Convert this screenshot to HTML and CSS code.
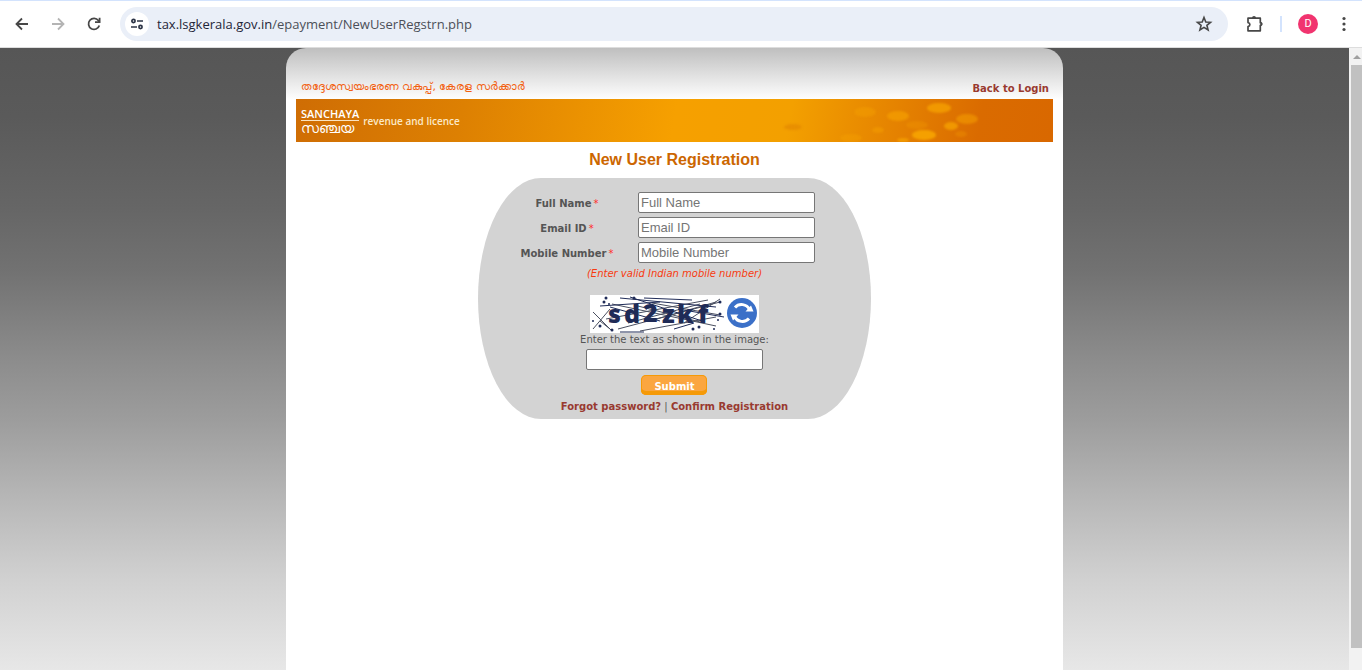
FILE: index.html
```html
<!DOCTYPE html>
<html lang="en">
<head>
<meta charset="utf-8">
<meta name="viewport" content="width=device-width, initial-scale=1">
<title>New User Registration</title>
<link rel="stylesheet" href="styles.css">
</head>
<body>
<header class="toolbar">
  <button class="tool" type="button" aria-label="Back"><svg width="16" height="16" viewBox="0 0 16 16" fill="none" stroke="#474747" stroke-width="1.8"><path d="M14 8H3M8 2.5 2.5 8 8 13.5"/></svg></button>
  <button class="tool" type="button" aria-label="Forward"><svg width="16" height="16" viewBox="0 0 16 16" fill="none" stroke="#b4b4b4" stroke-width="1.8"><path d="M2 8h11M8 2.5 13.500 8 8 13.500"/></svg></button>
  <button class="tool" type="button" aria-label="Reload"><svg width="16" height="16" viewBox="0 0 16 16" fill="none" stroke="#474747" stroke-width="1.8"><path d="M13.300 9.500A5.500 5.500 0 1 1 12.400 4.500L13.500 6"/><path d="M13.600 1.800V6.200H9"/></svg></button>
  <div class="address">
    <button class="site-info" type="button" aria-label="Site information"><svg width="14" height="14" viewBox="0 0 14 14" fill="none" stroke="#2c3446" stroke-width="1.700"><circle cx="3.500" cy="4" r="1.600"/><path d="M7 4h6M1 10h6"/><circle cx="10.500" cy="10" r="1.600"/></svg></button>
    <span class="url">tax.lsgkerala.gov.in<span class="path">/epayment/NewUserRegstrn.php</span></span>
    <button class="star" type="button" aria-label="Bookmark"><svg width="18" height="18" viewBox="0 0 18 18" fill="none" stroke="#474747" stroke-width="1.600"><path d="m9 2.500 1.800 4.500 4.700.3-3.600 3 1.200 4.700L9 12.400 4.900 15l1.200-4.700-3.600-3 4.700-.3z"/></svg></button>
  </div>
  <button class="extensions" type="button" aria-label="Extensions"><svg width="18" height="18" viewBox="0 0 18 18"><path d="M2 3.200h12.300v4.500h.4a1.400 1.400 0 0 1 0 2.600h-.4v5.500H2v-4.300c2.500-.4 2.500-3.500 0-3.900z" fill="none" stroke="#474747" stroke-width="1.700" stroke-linejoin="round"/><path d="M6 3a2 2 0 0 1 4 0zM14.500 7a2 2 0 0 1 0 4z" fill="#474747"/></svg></button>
  <span class="divider"></span>
  <button class="avatar" type="button">D</button>
  <button class="menu" type="button" aria-label="Menu"><svg width="4" height="16" viewBox="0 0 4 16" fill="#474747"><circle cx="2" cy="2.500" r="1.600"/><circle cx="2" cy="8" r="1.600"/><circle cx="2" cy="13.500" r="1.600"/></svg></button>
</header>
<div class="viewport">
  <div class="backdrop">
    <main class="sheet">
      <div class="top-row">
        <span class="department" lang="ml">തദ്ദേശസ്വയംഭരണ വകുപ്പ്, കേരള സര്‍ക്കാര്‍</span>
        <a class="link" href="#login">Back to Login</a>
      </div>
      <div class="banner">
        <svg class="spots" width="240" height="43" viewBox="0 0 240 43" fill="#f5a000">
          <ellipse cx="52" cy="13" rx="11" ry="5" opacity=".45"/><ellipse cx="85" cy="17" rx="11" ry="5" opacity=".7"/>
          <ellipse cx="126" cy="9" rx="12" ry="5" opacity=".8"/><ellipse cx="154" cy="20" rx="11" ry="5" opacity=".55"/>
          <ellipse cx="138" cy="27" rx="7" ry="4" opacity=".8"/><ellipse cx="111" cy="36" rx="12" ry="5"/>
          <ellipse cx="65" cy="31" rx="6" ry="3" opacity=".5"/><ellipse cx="38" cy="39" rx="11" ry="4" opacity=".45"/>
          <ellipse cx="104" cy="26" rx="11" ry="4" opacity=".3"/><ellipse cx="90" cy="41" rx="6" ry="2" opacity=".8"/>
          <ellipse cx="148" cy="35" rx="6" ry="3" opacity=".3"/><ellipse cx="-20" cy="28" rx="9" ry="3" fill="#e88f00"/>
        </svg>
        <span class="brand"><span class="brand-en">SANCHAYA</span><span class="brand-ml" lang="ml">സഞ്ചയ</span></span>
        <span class="tagline">revenue and licence</span>
      </div>
      <h1 class="title">New User Registration</h1>
      <form class="panel">
        <div class="fields">
          <label for="name">Full Name<span class="req">*</span></label><input class="box" id="name" type="text" placeholder="Full Name">
          <label for="email">Email ID<span class="req">*</span></label><input class="box" id="email" type="text" placeholder="Email ID">
          <label for="mobile">Mobile Number<span class="req">*</span></label><input class="box" id="mobile" type="text" placeholder="Mobile Number">
        </div>
        <p class="hint">(Enter valid Indian mobile number)</p>
        <div class="captcha">
          <svg width="136" height="38" viewBox="0 0 136 38" role="img" aria-label="Captcha">
            <g fill="none" stroke="#4a4f60" stroke-width="1"><path d="M3 17l18 18M3 34l17-20M10 26l10 8M22 9l104 22M28 34 130 7M16 24 118 5M50 36l76-14M44 10l70 18M62 8l68 12M94 28l36-24M60 26l66-19M38 28l72-19"/></g>
            <g fill="none" stroke="#1f2b57" stroke-width="1"><path d="M30 3l96 9M10 11l60-4M40 2l72 24M54 3l48 2M30 37h24M84 34l20-6M88 14l46 8M20 12l50 14"/></g>
            <g fill="#1f2b57"><circle cx="16" cy="3" r="1.500"/><circle cx="19" cy="9" r="1"/><circle cx="14" cy="7" r="1.500"/><circle cx="3" cy="26" r="1"/><circle cx="10" cy="31" r="1.500"/><circle cx="103" cy="34" r="1.500"/><circle cx="109" cy="32" r="1.500"/><circle cx="124" cy="34" r="1"/><circle cx="130" cy="7" r="1.500"/><circle cx="130" cy="19" r="1.500"/><circle cx="128" cy="25" r="1"/><circle cx="44" cy="3" r="1.500"/><circle cx="22" cy="35" r="1.500"/></g>
            <g class="code"><text x="18" y="28">s</text><text x="34" y="28">d</text><text x="53" y="27">2</text><text x="72" y="28">z</text><text x="87" y="28">k</text><text x="108" y="28">f</text></g>
          </svg>
          <button class="refresh" type="button" aria-label="New image"><svg width="32" height="32" viewBox="0 0 32 32"><circle cx="16" cy="16" r="15" fill="#3b70c8"/><g fill="none" stroke="#fff" stroke-width="3"><path d="M9 10.500a8.800 8.800 0 0 1 14.500 2"/><path d="M23 21.500a8.800 8.800 0 0 1-14.500-2"/></g><path d="M19.500 14.500h8L25 8.500zM12.500 17.500h-8L7 23.500z" fill="#fff"/></svg></button>
        </div>
        <label class="prompt" for="code">Enter the text as shown in the image:</label>
        <input class="box" id="code" type="text">
        <button class="submit" type="submit">Submit</button>
        <p class="links"><a class="link" href="#forgot">Forgot password?</a> | <a class="link" href="#confirm">Confirm Registration</a></p>
      </form>
    </main>
  </div>
  <div class="scrollbar"><span class="arrow"></span><span class="thumb"></span></div>
</div>
</body>
</html>
```
FILE: styles.css
```css
* { box-sizing: border-box; }
body {
  margin: 0;
  min-height: 100vh;
  display: flex;
  flex-direction: column;
  font: 10px/14px Verdana, "DejaVu Sans", sans-serif;
  color: #555;
}
button { border: 0; padding: 0; background: none; font: inherit; }
svg { display: block; }
p, h1 { margin: 0; }

.toolbar {
  height: 48px;
  display: flex;
  align-items: center;
  padding: 0 16px 0 14px;
  background: #fff;
  border-top: 1px solid #d3e3fd;
  border-bottom: 1px solid #ddd;
}
.tool { margin-right: 20px; }
.tool + .tool + .tool { margin-right: 18px; }
.address {
  flex: 1;
  height: 34px;
  display: flex;
  align-items: center;
  padding: 0 15px 0 5px;
  border-radius: 17px;
  background: #eaeff8;
}
.site-info {
  width: 24px;
  height: 24px;
  display: grid;
  place-items: center;
  border-radius: 50%;
  background: #fff;
}
.url {
  flex: 1;
  margin-left: 8px;
  font: 13px/20px "Open Sans", sans-serif;
  color: #1f2638;
}
.path { color: #4c4f58; }
.extensions { margin-left: 18px; }
.divider { width: 2px; height: 16px; margin: 0 16px; background: #d3e3fd; }
.avatar {
  width: 20px;
  height: 20px;
  border-radius: 50%;
  background: #f1346f;
  color: #fff;
  font: 11px/20px Roboto, sans-serif;
}
.menu { margin-left: 24px; }

.viewport { flex: 1; display: flex; }
.backdrop {
  flex: 1;
  display: flex;
  justify-content: center;
  background: linear-gradient(#565656, #5a5a5a 11%, #666 26%, #727272 36%, #8c8c8c 50%, #9d9d9d 60%, #bcbcbc 75%, #d0d0d0 85%, #e7e7e7);
}
.sheet {
  width: 57.6%;
  padding: 30px 10px 0;
  border-radius: 20px 20px 0 0;
  background: #fff linear-gradient(#bfbfbf, #fff) 0 0 / 100% 52px no-repeat;
}
.top-row {
  height: 21px;
  display: flex;
  justify-content: space-between;
  align-items: center;
  padding: 0 4px 0 5px;
}
.department { padding-bottom: 3px; color: #f26010; font-size: 11px; font-weight: 500; }
.link { color: #993a30; font-weight: bold; text-decoration: none; }
.banner {
  position: relative;
  height: 43px;
  display: flex;
  align-items: center;
  gap: 4px;
  padding-left: 5px;
  overflow: hidden;
  background: linear-gradient(100deg, #cf6d04, #dd8002 22%, #f6a000 50%, #f3a000 65%, #da6b00 90%, #d96800);
}
.spots { position: absolute; right: 0; top: 0; overflow: visible; filter: blur(1px); }
.brand {
  display: flex;
  flex-direction: column;
  color: #fff;
  font: 600 11px/13px "Open Sans", sans-serif;
}
.brand-ml { border-top: 1px solid #fbe3c0; font-size: 14px; font-weight: 500; }
.tagline { color: #fbe9c8; font: 600 10px/14px "Open Sans", sans-serif; }
.title {
  margin: 8px 0 9px;
  text-align: center;
  color: #cc6600;
  font: bold 16px/19px Arial, "Liberation Sans", sans-serif;
}
.panel {
  width: 52%;
  margin: 0 auto;
  padding: 14px 0 5px;
  display: flex;
  flex-direction: column;
  align-items: center;
  border-radius: 16% / 50%;
  background: #d3d3d3;
}
.fields {
  display: grid;
  grid-template-columns: 142px 177px;
  row-gap: 4px;
  align-items: center;
  padding-right: 38px;
  text-align: center;
  font-weight: bold;
}
.fields label { padding-top: 2px; }
.req { margin-left: 2px; color: #ff2a2a; font-weight: normal; }
.box {
  width: 177px;
  height: 21px;
  padding: 1px 2px;
  border: 1px solid #767676;
  border-radius: 2px;
  background: #fff;
  font: 13px/17px Arial, "Liberation Sans", sans-serif;
}
.box::placeholder { color: #757575; }
.hint { margin-top: 4px; color: #f83a10; font-style: italic; }
.captcha {
  width: 169px;
  height: 38px;
  margin-top: 14px;
  display: flex;
  align-items: flex-start;
  background: #fff;
}
.refresh { padding-top: 2px; }
.code { fill: #1f2b57; font: 800 25px "Open Sans", sans-serif; }
.prompt { margin-bottom: 2px; }
.submit {
  width: 66px;
  height: 20px;
  margin: 5px 0;
  padding-top: 3px;
  border-radius: 5px;
  background: #fba640;
  box-shadow: inset 0 0 0 1px #f59a08, inset 0 -4px 0 #f59a08;
  color: #fff;
  font-weight: bold;
}

.scrollbar {
  width: 13px;
  display: flex;
  flex-direction: column;
  align-items: flex-end;
  padding: 7px 0 22px;
  background: #f2f2f2;
}
.arrow {
  margin: 0 1px 6px;
  border: 4px solid transparent;
  border-top-width: 0;
  border-bottom: 4px solid #a0a0a0;
}
.thumb { flex: 1; width: 11px; background: #c1c1c1; }
```
